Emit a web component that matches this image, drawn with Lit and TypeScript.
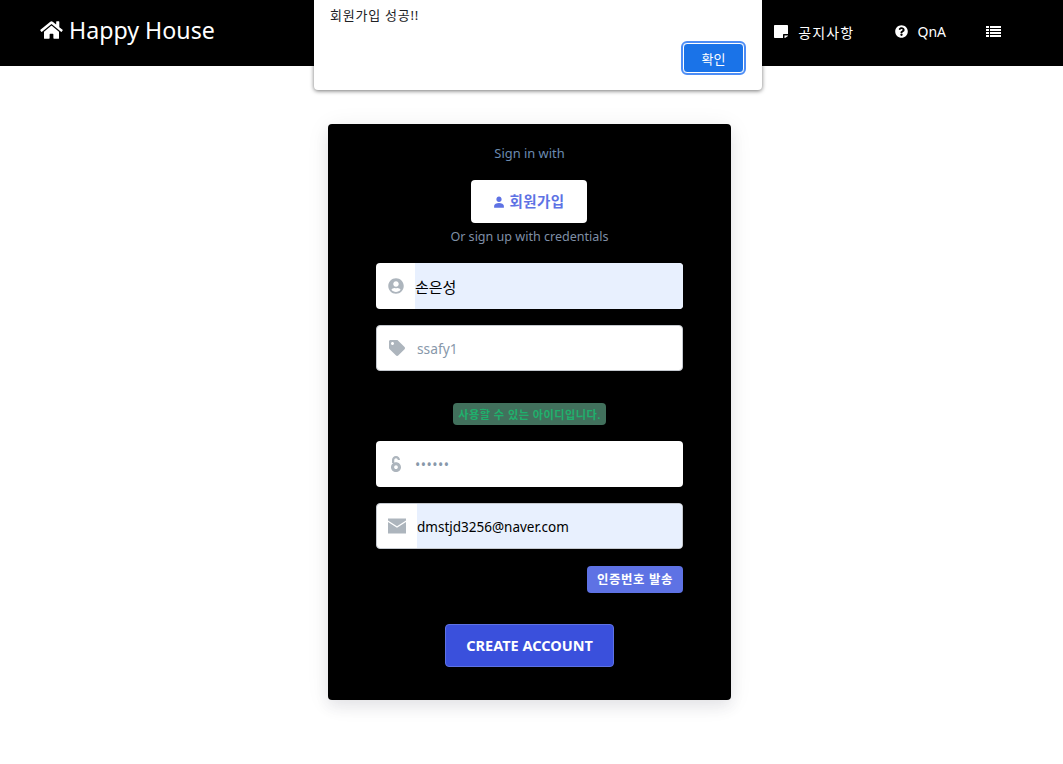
import { LitElement, html, css, svg } from "lit";
import { customElement } from "lit/decorators.js";

const icon = (vb: string, d: string, cls = "") =>
  html`<svg class=${cls} viewBox=${vb} fill="currentColor" aria-hidden="true">${svg`<path d=${d}></path>`}</svg>`;

const HOME = "M280.37 148.26L96 300.11V464a16 16 0 0 0 16 16l112.06-.29a16 16 0 0 0 15.92-16V368a16 16 0 0 1 16-16h64a16 16 0 0 1 16 16v95.64a16 16 0 0 0 16 16.05L464 480a16 16 0 0 0 16-16V300L295.67 148.26a12.19 12.19 0 0 0-15.3 0zM571.6 251.47L488 182.56V44.05a12 12 0 0 0-12-12h-56a12 12 0 0 0-12 12v72.61L318.47 43a48 48 0 0 0-61 0L4.34 251.47a12 12 0 0 0-1.6 16.9l25.5 31A12 12 0 0 0 45.15 301l235.22-193.74a12.19 12.19 0 0 1 15.3 0L530.9 301a12 12 0 0 0 16.9-1.6l25.5-31a12 12 0 0 0-1.7-16.93z";
const QUESTION = "M504 256c0 136.997-111.043 248-248 248S8 392.997 8 256C8 119.083 119.043 8 256 8s248 111.083 248 248zM262.655 90c-54.497 0-89.255 22.957-116.549 63.758-3.536 5.286-2.353 12.415 2.715 16.258l34.699 26.31c5.205 3.947 12.621 3.008 16.665-2.122 17.864-22.658 30.113-35.797 57.303-35.797 20.429 0 45.698 13.148 45.698 32.958 0 14.976-12.363 22.667-32.534 33.976C247.128 238.528 216 254.941 216 296v4c0 6.627 5.373 12 12 12h56c6.627 0 12-5.373 12-12v-1.333c0-28.462 83.186-29.647 83.186-106.667 0-58.002-60.165-102-116.531-102zM256 338c-25.365 0-46 20.635-46 46 0 25.364 20.635 46 46 46s46-20.636 46-46c0-25.365-20.635-46-46-46z";
const NOTE = "M0 1C0 .4 .4 0 1 0h12c.6 0 1 .4 1 1v8h-4c-.6 0-1 .4-1 1v3H1c-.6 0-1-.4-1-1zM14 10.500v.5L11 13h-.5v-2.500z";
const LIST = "M0 0h3v2H0zM4 0h11v2H4zM0 3h3v2H0zM4 3h11v2H4zM0 6h3v2H0zM4 6h11v2H4zM0 9h3v2H0zM4 9h11v2H4z";
const USER = "M256 256c62 0 112-50 112-120S318 16 256 16 144 66 144 136s50 120 112 120zM256 296C150 296 48 340 48 420v76h416v-76c0-80-102-124-208-124z";
const USER_CIRCLE = "M256 8C119 8 8 119 8 256s111 248 248 248 248-111 248-248S393 8 256 8zm0 96c48.600 0 88 39.400 88 88s-39.400 88-88 88-88-39.400-88-88 39.400-88 88-88zm0 344c-58.700 0-111.300-26.600-146.500-68.200 18.800-35.400 55.600-59.800 98.500-59.800 2.400 0 4.800.4 7.100 1.100 13 4.200 26.600 6.900 40.900 6.900s28-2.700 40.900-6.900c2.300-.7 4.700-1.100 7.100-1.100 42.900 0 79.700 24.400 98.500 59.800C367.300 421.400 314.700 448 256 448z";
const TAG = "M0 252V48C0 21 21 0 48 0h204c13 0 25 5 34 14l212 212c19 19 19 49 0 68L294 498c-19 19-49 19-68 0L14 286C5 277 0 265 0 252zM112 64c-27 0-48 21-48 48s21 48 48 48 48-21 48-48-21-48-48-48z";
const UNLOCK = "M160 0C85 0 32 56 32 130v96h72v-94c0-36 22-62 56-62s56 24 56 58h72C288 56 235 0 160 0zM160 200C72 200 0 272 0 356s72 156 160 156 160-72 160-156-72-156-160-156zm0 96c33 0 60 27 60 60s-27 60-60 60-60-27-60-60 27-60 60-60z";
const MAIL = "M0 40h512v60L256 264 0 100zM0 140l256 164 256-164v332H0z";

@customElement("app-root")
export class AppRoot extends LitElement {
  static styles = css`
    :host {
      display: block;
      position: relative;
      min-height: 764px;
      background: #fff;
      font-family: "Noto Sans", "Noto Sans CJK KR", sans-serif;
      overflow: hidden;
    }
    .nav {
      height: 66px;
      background: #000;
      color: #fff;
      display: flex;
      align-items: center;
      justify-content: space-between;
      padding: 0 62px 0 40px;
    }
    .brand {
      display: flex;
      align-items: center;
      gap: 6px;
      font-size: 23.2px;
      line-height: 28px;
      margin-top: -7px;
    }
    .brand svg { width: 23px; height: 20px; }
    .links {
      display: flex;
      align-items: center;
      gap: 41px;
      font-size: 14px;
      margin-top: -3px;
    }
    .link { display: flex; align-items: center; gap: 10px; }
    .link.qna { gap: 9px; }
    .link:last-child { margin-left: -1px; }
    .link svg { width: 13px; height: 13px; display: block; }
    .link .note { width: 14px; height: 13px; }
    .link .lst { width: 15px; height: 11px; }
    .kr-nav { letter-spacing: 1.2px; }
    .alert {
      position: absolute;
      left: 314px;
      top: 0;
      width: 448px;
      height: 90px;
      box-sizing: border-box;
      background: #fff;
      border-radius: 0 0 4px 4px;
      box-shadow: 0 1px 4px rgba(0, 0, 0, 0.55);
      padding: 6px 16px 17px;
      display: flex;
      flex-direction: column;
      justify-content: space-between;
      color: #202124;
      font-size: 13px;
    }
    .alert-text { line-height: 18px; letter-spacing: 0.75px; }
    .ok {
      align-self: flex-end;
      width: 61px;
      height: 30px;
      border: 1px solid #fff;
      outline: 2px solid #4c8df6;
      border-radius: 4px;
      background: #1a73e8;
      color: #fff;
      font: inherit;
      font-size: 13px;
      padding: 0;
      position: relative;
      right: 2px;
    }
    main {
      display: flex;
      justify-content: center;
      padding: 58px 4px 64px 0;
    }
    .card {
      width: 403px;
      height: 576px;
      box-sizing: border-box;
      background: #000;
      border-radius: 4px;
      box-shadow: 0 7px 14px rgba(50, 50, 93, 0.08), 0 3px 24px rgba(0, 0, 0, 0.07);
      padding: 20px 48px 0;
      display: flex;
      flex-direction: column;
      align-items: center;
      color: #8898aa;
    }
    .small { font-size: 12.55px; line-height: 18px; }
    .signin { color: #6b8ab0; font-size: 12.9px; }
    .join {
      width: 116px;
      height: 43px;
      margin: 18px 2px 0 0;
      border: 0;
      border-radius: 4px;
      background: #fff;
      color: #5e72e4;
      font: inherit;
      font-size: 14.5px;
      font-weight: 700;
      letter-spacing: 0.4px;
      display: flex;
      align-items: center;
      justify-content: center;
      gap: 5px;
      padding: 0 0 2px;
    }
    .join svg { width: 12px; height: 12px; margin-top: 2px; }
    .or { margin-top: 5px; color: #7f8fa6; }
    .field {
      align-self: stretch;
      height: 46px;
      box-sizing: border-box;
      background: #fff;
      border-radius: 4px;
      display: flex;
      align-items: stretch;
      overflow: hidden;
      font-size: 13.5px;
      margin-top: 16px;
    }
    .first { margin-top: 17px; }
    .bordered { border: 1px solid #c4c8ce; }
    .ico {
      width: 39px;
      flex: none;
      display: flex;
      align-items: center;
      justify-content: center;
      color: #adb5bd;
    }
    .ico svg { width: 16px; height: 16px; }
    .ico .mail { width: 18px; height: 18px; }
    .bordered .ico { width: 40px; }
    .val {
      flex: 1;
      display: flex;
      align-items: center;
    }
    .filled { background: #e8f0fe; color: #000; padding-top: 2px; }
    .name { font-size: 15px; padding-top: 0; }
    .ph { color: #8898aa; font-size: 13.8px; }
    .dots { font-size: 14px; letter-spacing: 0.5px; }
    .badge {
      margin: 32px 0 0;
      width: 153px;
      height: 22px;
      border-radius: 4px;
      background: #41705c;
      color: #1fb06c;
      font-size: 11.2px;
      letter-spacing: 0.45px;
      font-weight: 700;
      display: flex;
      align-items: center;
      justify-content: center;
    }
    .badge + .field { margin-top: 16px; }
    .send {
      align-self: flex-end;
      margin: 17px 0 1px;
      width: 96px;
      height: 27px;
      border: 0;
      border-radius: 4px;
      background: #5e72e4;
      color: #fff;
      font: inherit;
      font-size: 12.4px;
      letter-spacing: 0.6px;
      font-weight: 700;
      padding: 0 0 2px;
    }
    .create {
      margin-top: 30px;
      width: 169px;
      height: 43px;
      box-sizing: border-box;
      border: 1px solid #5e72e4;
      border-radius: 4px;
      background: #3a50dc;
      color: #fff;
      font: inherit;
      font-size: 14.5px;
      font-weight: 700;
      padding: 0 0 2px;
    }
  `;

  render() {
    return html`
      <nav class="nav">
        <div class="brand">${icon("0 0 576 512", HOME)}<span>Happy House</span></div>
        <div class="links">
          <div class="link">${icon("0 0 14 13", NOTE, "note")}<span class="kr-nav">공지사항</span></div>
          <div class="link qna">${icon("0 0 512 512", QUESTION)}<span>QnA</span></div>
          <div class="link">${icon("0 0 15 11", LIST, "lst")}</div>
        </div>
      </nav>
      <main>
        <section class="card">
          <div class="small signin">Sign in with</div>
          <button class="join">${icon("0 0 512 512", USER)}<span>회원가입</span></button>
          <div class="small or">Or sign up with credentials</div>
          <div class="field first">
            <span class="ico">${icon("0 0 512 512", USER_CIRCLE)}</span>
            <span class="val filled name">손은성</span>
          </div>
          <div class="field bordered">
            <span class="ico">${icon("0 0 512 512", TAG)}</span>
            <span class="val ph">ssafy1</span>
          </div>
          <div class="badge">사용할 수 있는 아이디입니다.</div>
          <div class="field">
            <span class="ico">${icon("0 0 320 512", UNLOCK)}</span>
            <span class="val ph dots">••••••</span>
          </div>
          <div class="field bordered">
            <span class="ico">${icon("0 0 512 512", MAIL, "mail")}</span>
            <span class="val filled">dmstjd3256@naver.com</span>
          </div>
          <button class="send">인증번호 발송</button>
          <button class="create">CREATE ACCOUNT</button>
        </section>
      </main>
      <div class="alert" role="alertdialog">
        <div class="alert-text">회원가입 성공!!</div>
        <button class="ok">확인</button>
      </div>
    `;
  }
}
